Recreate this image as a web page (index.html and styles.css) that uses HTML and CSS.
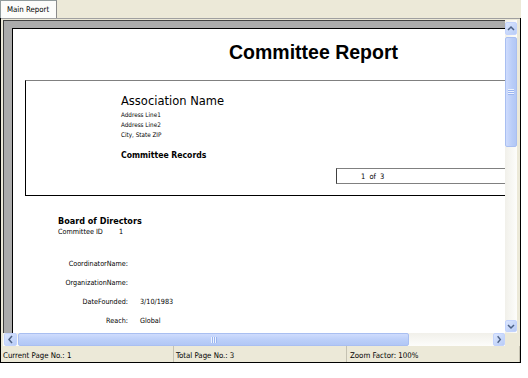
FILE: index.html
```html
<!DOCTYPE html>
<html>
<head>
<meta charset="utf-8">
<link rel="stylesheet" href="styles.css">
</head>
<body>
<div class="app">
  <div class="tabstrip"><div class="tab">Main Report</div></div>
  <div class="window">
    <div class="viewer">
      <div class="canvas">
        <div class="page">
          <h1 class="title">Committee Report</h1>
          <div class="header-box">
            <div class="org">
              <div class="org-name">Association Name</div>
              <div class="addr first">Address Line1</div>
              <div class="addr">Address Line2</div>
              <div class="addr">City, State ZIP</div>
              <div class="records">Committee Records</div>
            </div>
            <div class="pagenum">1 of 3</div>
          </div>
          <div class="committee">
            <div class="committee-name">Board of Directors</div>
            <div class="committee-id"><span class="id-label">Committee ID</span><span>1</span></div>
            <div class="fields">
              <div class="label">CoordinatorName:</div><div class="value"></div>
              <div class="label">OrganizationName:</div><div class="value"></div>
              <div class="label">DateFounded:</div><div class="value">3/10/1983</div>
              <div class="label">Reach:</div><div class="value">Global</div>
            </div>
          </div>
        </div>
      </div>
      <div class="vscroll">
        <div class="sbtn up"><svg width="10" height="11" viewBox="0 0 10 11"><polyline points="2,7 5,4 8,7" fill="none" stroke="#4d6185" stroke-width="1.5"/></svg></div>
        <div class="vthumb"><div class="vgrip"></div></div>
        <div class="sbtn down"><svg width="10" height="11" viewBox="0 0 10 11"><polyline points="2,4 5,7 8,4" fill="none" stroke="#4d6185" stroke-width="1.5"/></svg></div>
      </div>
      <div class="hscroll">
        <div class="sbtn left"><svg width="11" height="11" viewBox="0 0 11 11"><polyline points="7,2 4,5.5 7,9" fill="none" stroke="#4d6185" stroke-width="1.5"/></svg></div>
        <div class="hthumb"><div class="hgrip"></div></div>
        <div class="sbtn right"><svg width="11" height="11" viewBox="0 0 11 11"><polyline points="4,2 7,5.5 4,9" fill="none" stroke="#4d6185" stroke-width="1.5"/></svg></div>
      </div>
      <div class="corner"></div>
    </div>
    <div class="statusbar">
      <div class="sb-cell c1">Current Page No.: 1</div>
      <div class="sb-cell c2">Total Page No.: 3</div>
      <div class="sb-cell c3">Zoom Factor: 100%</div>
    </div>
  </div>
</div>
</body>
</html>
```
FILE: styles.css
```css
body {
  margin: 0;
  background: #fff;
  font-family: "DejaVu Sans Condensed", "DejaVu Sans", sans-serif;
  color: #000;
}
.app { width: 521px; }
.tabstrip {
  height: 18px;
  background: #ece9d8;
  display: flex;
}
.tab {
  width: 57px;
  height: 18px;
  box-sizing: border-box;
  background: #fcfcfa;
  border: 1px solid #919b9c;
  border-bottom: none;
  border-right-color: #8a8a8a;
  font-size: 7.8px;
  line-height: 17px;
  padding-left: 6px;
  white-space: nowrap;
}
.window {
  border: 1px solid #000;
  border-top: none;
  background: #ece9d8;
}
.viewer {
  display: grid;
  grid-template-columns: 502px 12px;
  grid-template-rows: 313px 13px;
  padding: 1px 3px 0 2px;
  border-top: 1px solid #a0a0a0;
}
.canvas {
  grid-column: 1;
  grid-row: 1;
  background: #ababab;
  border-top: 1px solid #404040;
  border-left: 1px solid #404040;
  padding: 7px 0 0 8px;
  overflow: hidden;
  box-sizing: border-box;
}
.page {
  width: 640px;
  height: 420px;
  background: #fff;
  border-top: 1px solid #000;
  border-left: 1px solid #000;
}
.title {
  margin: 0;
  padding: 13px 0 0 216px;
  font: bold 19.5px/20px "Liberation Sans", Arial, sans-serif;
  white-space: nowrap;
}
.header-box {
  margin: 18px 0 0 12px;
  border-top: 1px solid #808080;
  border-left: 1px solid #000;
  border-bottom: 1px solid #000;
  height: 114px;
}
.org { padding: 14px 0 0 95px; }
.org-name {
  font-family: "DejaVu Sans", sans-serif;
  font-size: 11.5px;
  line-height: 13px;
  white-space: nowrap;
}
.addr { font-size: 6.3px; line-height: 10px; white-space: nowrap; }
.addr.first { margin-top: 2px; }
.records {
  margin-top: 10px;
  font-weight: bold;
  font-size: 8.6px;
  line-height: 11px;
  white-space: nowrap;
}
.pagenum {
  margin: 7px 0 0 310px;
  border-top: 1px solid #808080;
  border-left: 1px solid #404040;
  border-bottom: 1px solid #808080;
  height: 13px;
  padding: 1px 0 0 24px;
  font-size: 7.5px;
  line-height: 13px;
  word-spacing: 2px;
}
.committee { padding-left: 45px; margin-top: 20px; }
.committee-name {
  font-weight: bold;
  font-size: 9px;
  line-height: 11px;
  white-space: nowrap;
}
.committee-id { font-size: 7.2px; line-height: 10px; white-space: nowrap; }
.id-label { display: inline-block; width: 61px; }
.fields {
  display: grid;
  grid-template-columns: 115px 100px;
  column-gap: 12px;
  margin-top: 16.5px;
  margin-left: -45px;
  font-size: 7.2px;
  line-height: 19.33px;
}
.fields .label { text-align: right; white-space: nowrap; }

/* scrollbars */
.vscroll {
  grid-column: 2;
  grid-row: 1;
  display: flex;
  flex-direction: column;
  padding-top: 2px;
  box-sizing: border-box;
  background: linear-gradient(to right, #f1f0ea, #fdfdfb);
}
.hscroll {
  grid-column: 1;
  grid-row: 2;
  display: flex;
  align-items: stretch;
  background: linear-gradient(#f1f0ea, #fdfdfb);
}
.corner { grid-column: 2; grid-row: 2; background: #ece9d8; }
.sbtn {
  box-sizing: border-box;
  border: 1px solid #c3d3fd;
  border-radius: 2px;
  background: linear-gradient(135deg, #dbe6fe, #b8ccf7);
  display: flex;
  align-items: center;
  justify-content: center;
}
.sbtn svg { display: block; }
.vscroll .sbtn { height: 13px; }
.vscroll .down { margin-top: auto; margin-bottom: 1px; height: 12px; }
.hscroll .sbtn { width: 13px; }
.hscroll .left { margin-left: 1px; }
.hscroll .right { margin-left: auto; width: 12px; }
.vthumb {
  margin-top: 2px;
  height: 110px;
  box-sizing: border-box;
  border: 1px solid #a9bff1;
  border-radius: 2px;
  background: linear-gradient(to right, #cfdcfd, #b9cdf8 60%, #b2c7f5);
  display: flex;
  align-items: center;
  justify-content: center;
}
.vgrip {
  width: 6px;
  height: 6px;
  background: repeating-linear-gradient(#eef3fe 0 1px, #9bb5ef 1px 2px);
}
.hthumb {
  margin-left: 1px;
  width: 391px;
  box-sizing: border-box;
  border: 1px solid #a9bff1;
  border-radius: 2px;
  background: linear-gradient(#cfdcfd, #b9cdf8 60%, #b2c7f5);
  display: flex;
  align-items: center;
  justify-content: center;
}
.hgrip {
  width: 6px;
  height: 6px;
  background: repeating-linear-gradient(to right, #eef3fe 0 1px, #9bb5ef 1px 2px);
}

/* status bar */
.statusbar {
  display: flex;
  height: 16px;
  font-size: 7.8px;
  line-height: 13px;
}
.sb-cell {
  box-sizing: border-box;
  width: 173px;
  padding-top: 3px;
  border-right: 1px solid #c5c2b2;
  white-space: nowrap;
}
.c1 { padding-left: 2px; }
.c2 { padding-left: 2px; }
.c3 { padding-left: 3px; }
```
